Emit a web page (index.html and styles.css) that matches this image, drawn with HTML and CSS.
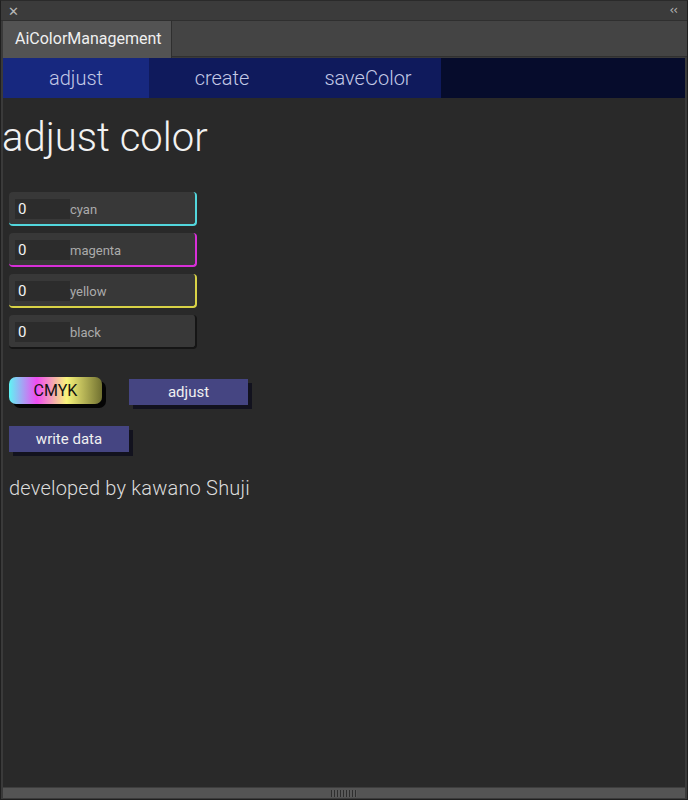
FILE: index.html
```html
<!DOCTYPE html>
<html>
<head>
<meta charset="utf-8">
<link rel="stylesheet" href="styles.css">
</head>
<body>
<div class="window">
  <div class="titlebar">
    <span class="close">&#x2715;</span>
    <span class="collapse">&lsaquo;&lsaquo;</span>
  </div>
  <div class="tabrow">
    <div class="tab">AiColorManagement</div>
    <div class="tabfill"></div>
  </div>
  <div class="panel">
    <nav class="nav">
      <div class="navitem active">adjust</div>
      <div class="navitem">create</div>
      <div class="navitem">saveColor</div>
      <div class="navfill"></div>
    </nav>
    <div class="content">
      <h1 class="title">adjust color</h1>
      <div class="fields">
        <div class="field cyan"><span class="val">0</span><span class="lbl">cyan</span></div>
        <div class="field magenta"><span class="val">0</span><span class="lbl">magenta</span></div>
        <div class="field yellow"><span class="val">0</span><span class="lbl">yellow</span></div>
        <div class="field black"><span class="val">0</span><span class="lbl">black</span></div>
      </div>
      <div class="btnrow">
        <button class="cmyk">CMYK</button>
        <button class="btn adjust">adjust</button>
      </div>
      <div class="btnrow2">
        <button class="btn write">write data</button>
      </div>
      <p class="credit">developed by kawano Shuji</p>
    </div>
  </div>
  <div class="resize"><span class="grip"></span></div>
</div>
</body>
</html>
```
FILE: styles.css
```css
html, body {
  margin: 0;
  padding: 0;
  background: #2a2a2a;
}
.window {
  width: 688px;
  height: 800px;
  box-sizing: border-box;
  background: #3a3a3a;
  border: 1px solid #1f1f1f;
  border-top: 1px solid #2a2a2a;
  display: flex;
  flex-direction: column;
  font-family: "Roboto", "Liberation Sans", sans-serif;
}
.titlebar {
  height: 19px;
  display: flex;
  justify-content: space-between;
  align-items: center;
  padding: 0 10px 0 7px;
  color: #b8b8b8;
  background: #3b3b3b;
}
.close {
  font-size: 13px;
  line-height: 19px;
  padding-top: 2px;
  font-family: "DejaVu Sans", sans-serif;
}
.collapse {
  font-size: 12px;
  letter-spacing: -1px;
  line-height: 19px;
  font-family: "DejaVu Sans", sans-serif;
}
.tabrow {
  height: 37px;
  display: flex;
  padding-left: 2px;
  border-top: 1px solid #2f2f2f;
}
.tab {
  width: 169px;
  background: #535353;
  color: #f0f0f0;
  font-size: 16px;
  line-height: 36px;
  padding-left: 12px;
  box-sizing: border-box;
  border-right: 1px solid #2f2f2f;
}
.tabfill {
  flex: 1;
  background: #444444;
  border-bottom: 1px solid #303030;
  margin-bottom: 1px;
}
.panel {
  flex: 1;
  margin: 0 2px;
  background: #292929;
  display: flex;
  flex-direction: column;
}
.nav {
  height: 40px;
  display: flex;
}
.navitem {
  width: 146px;
  background: #0f1a5c;
  color: #c3c9e6;
  font-size: 20px;
  font-weight: 300;
  line-height: 40px;
  text-align: center;
}
.navitem.active {
  background: #17287f;
}
.navfill {
  flex: 1;
  background: #060c2c;
}
.content {
  flex: 1;
  padding: 0;
}
.title {
  margin: 16px 0 0 -1px;
  font-size: 40px;
  font-weight: 300;
  line-height: 48px;
  color: #f2f2f2;
}
.fields {
  margin: 30px 0 0 6px;
  display: flex;
  flex-direction: column;
  gap: 7px;
}
.field {
  width: 188px;
  height: 34px;
  box-sizing: border-box;
  background: #383838;
  border-radius: 4px;
  border-right: 2px solid;
  border-bottom: 2px solid;
  display: flex;
  align-items: center;
  padding-left: 6px;
}
.field.cyan { border-color: #52d6dc; }
.field.magenta { border-color: #d82fd8; }
.field.yellow { border-color: #d8d246; }
.field.black { border-color: #151515; }
.val {
  width: 55px;
  height: 20px;
  background: #2c2c2c;
  color: #f4f4f4;
  font-size: 15px;
  line-height: 20px;
  padding-left: 3px;
  box-sizing: border-box;
  margin-top: 1px;
}
.lbl {
  color: #ababab;
  font-size: 13px;
  margin-top: 2px;
}
.btnrow {
  margin: 28px 0 0 6px;
  display: flex;
  align-items: flex-start;
  gap: 27px;
}
.cmyk {
  width: 93px;
  height: 27px;
  border: none;
  border-radius: 7px;
  background: linear-gradient(90deg, #5ff4f4 0%, #f04cf2 30%, #f8f47a 62%, #707030 100%);
  box-shadow: 4px 4px 0 #050505;
  color: #111;
  font-family: "Roboto", "Liberation Sans", sans-serif;
  font-size: 16px;
  padding: 0;
}
.btn {
  height: 26px;
  border: none;
  background: #454582;
  box-shadow: 4px 4px 0 #12121e;
  color: #f0f0f0;
  font-family: "Roboto", "Liberation Sans", sans-serif;
  font-size: 15px;
  padding: 0;
}
.adjust {
  width: 119px;
  margin-top: 2px;
}
.btnrow2 {
  margin: 21px 0 0 6px;
}
.write {
  width: 120px;
}
.credit {
  margin: 24px 0 0 6px;
  font-size: 20px;
  font-weight: 300;
  color: #dcdcdc;
  letter-spacing: 0.2px;
}
.resize {
  height: 10px;
  background: #545454;
  border-top: 1px solid #3e3e3e;
  margin: 0 2px 1px;
  display: flex;
  justify-content: center;
  align-items: center;
}
.grip {
  width: 26px;
  height: 7px;
  background: repeating-linear-gradient(90deg, #2e2e2e 0 1px, #5a5a5a 1px 3px);
}
```
